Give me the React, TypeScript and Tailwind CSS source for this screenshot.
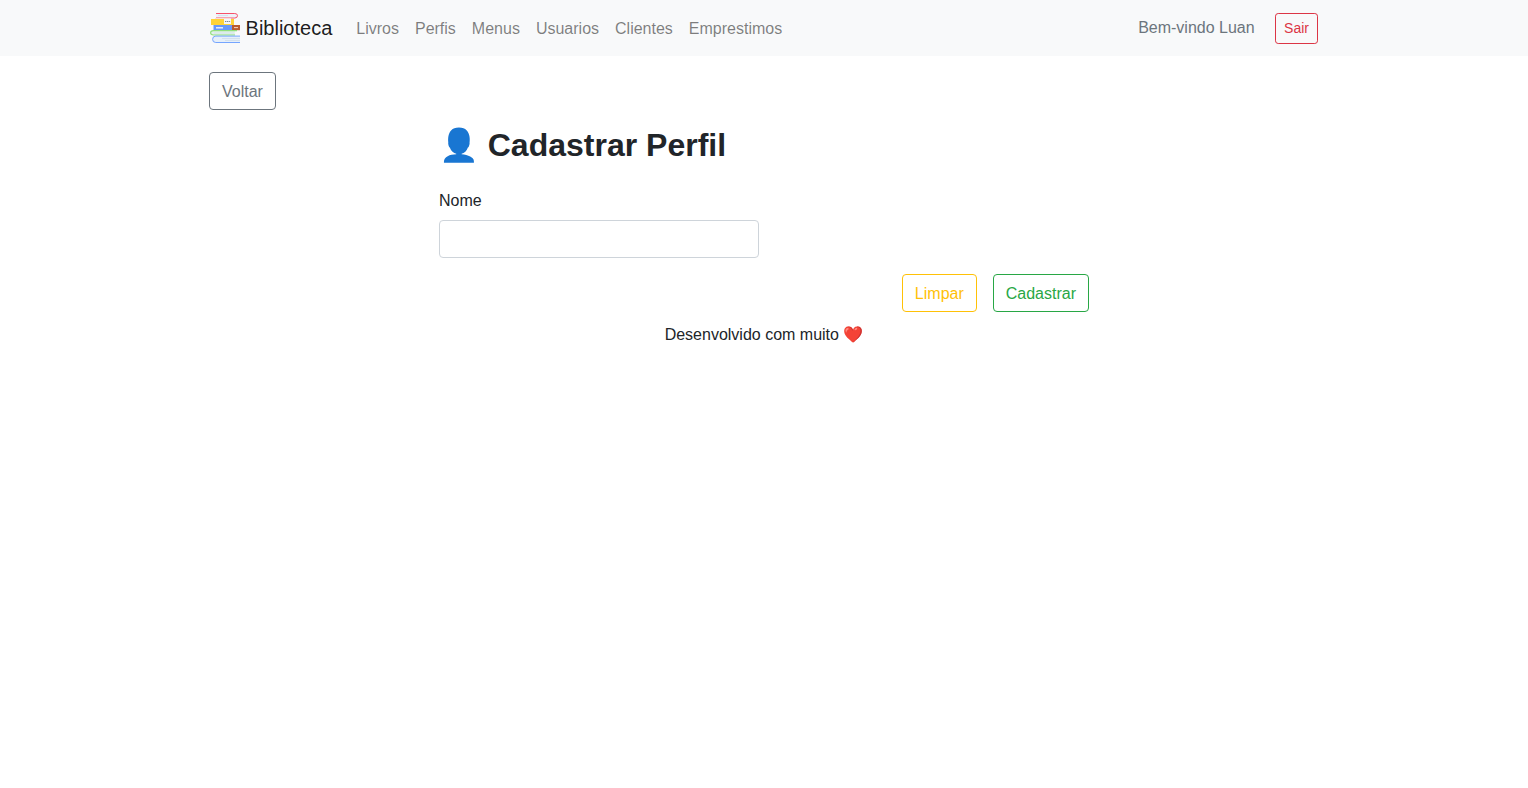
import { useState } from "react";

const links = ["Livros", "Perfis", "Menus", "Usuarios", "Clientes", "Emprestimos"];

function BooksLogo() {
  return (
    <svg width="30" height="30" viewBox="0 0 30 30" className="ml-px shrink-0" fill="none" aria-hidden="true">
      <path d="M6 1h19.5q2 0 2 1.8t-2 1.8H6z" fill="#edf2f9" />
      <path d="M8 2.5h10" stroke="#d6e4f0" />
      <path d="M6 .5h18.8q2.7 0 2.7 2.2t-2.7 2.3H6" stroke="#f6516b" />
      <path d="M1 6h23v6H1z" fill="#ffd338" />
      <path d="M5 5h16v1H5z" fill="#f5dfda" />
      <path d="M14 6h7v5h-7z" fill="#f3f6fb" />
      <path d="M15 8.5h1.4m.6 0h1.4m.7 0h1" stroke="#7c8795" strokeWidth="1.2" />
      <path d="M3.5 12H22v5.5H3.5z" fill="#6898fa" />
      <path d="M6 14.8h7" stroke="#edf4ff" strokeWidth="1.4" />
      <path d="M22 12h8v5.2h-8z" fill="#b95b2e" />
      <path d="M24 14.6h4" stroke="#f3d4c4" />
      <path d="M3 18h22v4H3Q.8 22 .8 20T3 18z" fill="#e3f0ec" />
      <path d="M4 20h20" stroke="#d5e5ec" />
      <path d="M27 17.6H3.5Q.6 17.6.6 19.8T3.5 22H25" stroke="#91df7e" strokeWidth="1.1" />
      <path d="M30 23.3H5.5q-3 0-3 3.1t3 3H30z" fill="#e6eff9" />
      <path d="M12 25.5h18M15 27.5h15" stroke="#d2e0ee" />
      <path d="M30 23.1H5.8q-3.2 0-3.2 3.2t3.2 3.2H30" stroke="#75a5ff" />
    </svg>
  );
}

export default function App() {
  const [nome, setNome] = useState("");

  return (
    <div className="min-h-screen bg-white font-['Liberation_Sans',Arial,'Noto_Color_Emoji',sans-serif] text-base leading-6 text-[#212529]">
      <nav className="h-14 bg-[#f8f9fa]">
        <div className="mx-auto flex h-full w-[1110px] items-center">
          <a href="#" className="mr-4 flex items-center text-xl leading-[30px] text-black/90">
            <BooksLogo />
            <span className="ml-[5.56px]">Biblioteca</span>
          </a>
          <ul className="flex pt-0.5">
            {links.map((link) => (
              <li key={link}>
                <a href="#" className="block p-2 text-black/50">{link}</a>
              </li>
            ))}
          </ul>
          <div className="mr-px ml-auto flex items-center">
            <span className="mr-[20.45px] text-[#6c757d]">Bem-vindo Luan</span>
            <button className="mt-px h-[31px] rounded-[3.2px] border border-[#dc3545] px-2 text-sm leading-[21px] text-[#dc3545]">Sair</button>
          </div>
        </div>
      </nav>

      <div className="mx-auto w-[1110px] pt-4">
        <button className="block h-[38px] rounded border border-[#6c757d] px-3 pt-0.5 text-[#6c757d]">Voltar</button>
      </div>

      <main className="mx-auto w-[650px] pt-4">
        <h1 className="mb-6 text-[32px] leading-[38.4px] font-bold">👤 Cadastrar Perfil</h1>
        <form onSubmit={(event) => event.preventDefault()}>
          <label htmlFor="nome" className="mb-[7px] block pt-px">Nome</label>
          <input
            id="nome"
            value={nome}
            onChange={(event) => setNome(event.target.value)}
            className="block h-[38px] w-80 rounded border border-[#ced4da] px-3"
          />
          <div className="mt-4 flex justify-end gap-4">
            <button type="button" onClick={() => setNome("")} className="h-[38px] rounded border border-[#ffc107] px-3 pt-0.5 text-[#ffc107]">Limpar</button>
            <button type="submit" className="h-[38px] rounded border border-[#28a745] px-3 pt-0.5 text-[#28a745]">Cadastrar</button>
          </div>
        </form>
      </main>
      <footer className="pt-[11px] text-center">Desenvolvido com muito ❤️</footer>
    </div>
  );
}
